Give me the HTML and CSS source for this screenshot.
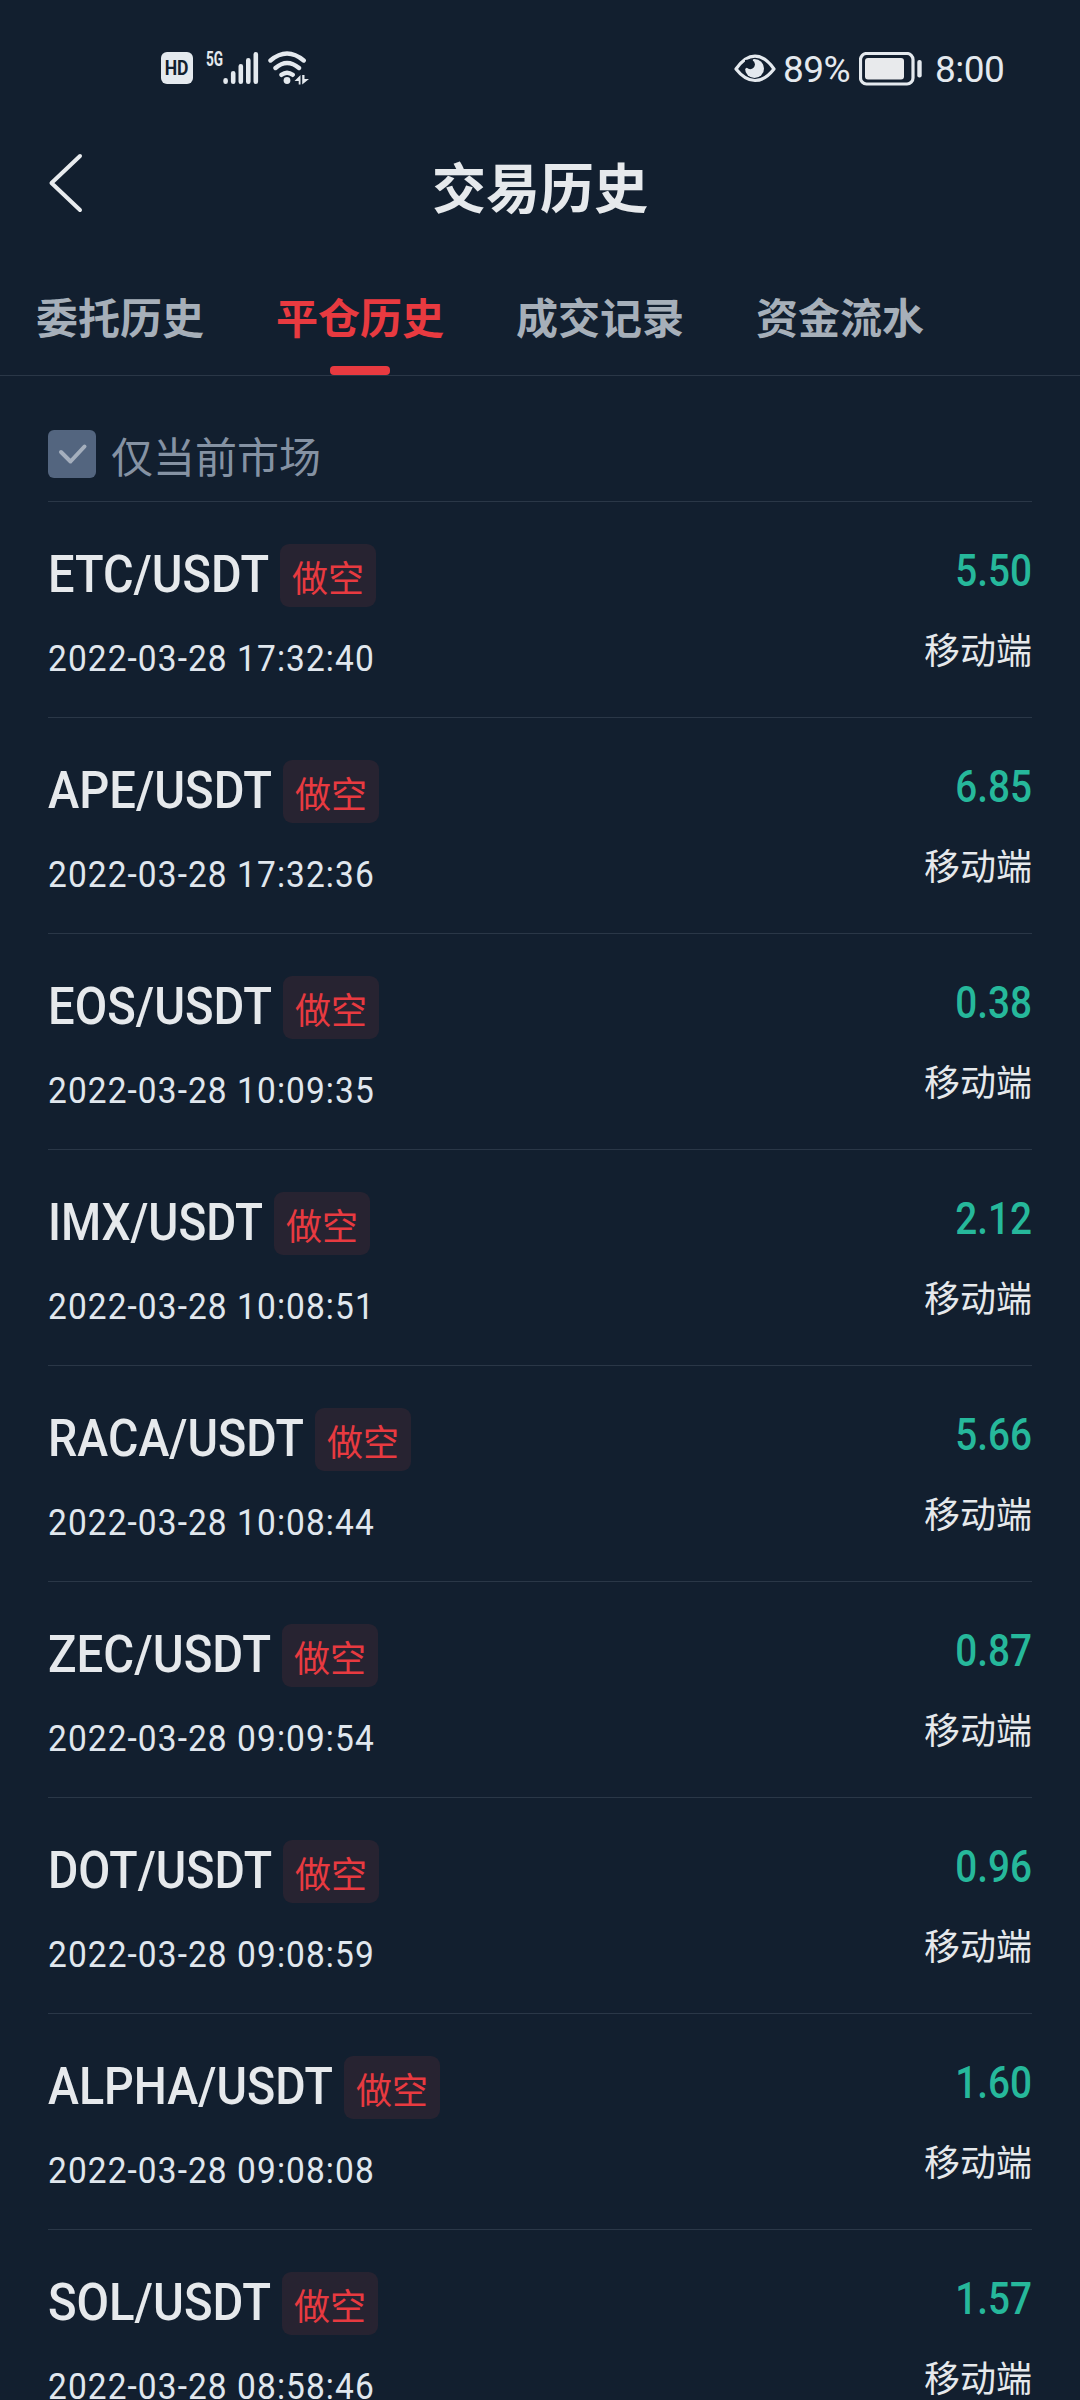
FILE: index.html
```html
<!DOCTYPE html>
<html lang="zh-CN">
<head>
<meta charset="utf-8">
<title>交易历史</title>
<link rel="stylesheet" href="styles.css">
</head>
<body>
<div class="status">
  <div class="status-left">
    <span class="hd"><span class="hd-text">HD</span></span>
    <span class="net"><span class="net-text">5G</span></span>
    <svg class="bars" width="36" height="34" viewBox="0 0 36 34" stroke="#e4e9ee" stroke-width="4.6" stroke-linecap="round"><path d="M2.6 29.3v1.4M10.2 22.3v8.4M17.8 15.3v15.4M25.3 9.3v21.4M32.8 3.3v27.4"/></svg>
    <svg class="wifi" width="42" height="34" viewBox="0 0 42 34" fill="none" stroke="#e4e9ee" stroke-width="4.4" stroke-linecap="round"><path d="M2.5 9.5Q19 -4.500 35.700 9.500M7.500 17Q19 7 31 17M13.500 23.800Q19 19.500 24.700 23.800"/><circle cx="19" cy="29.500" r="3.400" fill="#e4e9ee" stroke="none"/><path d="M26.500 30l6-6v9.500h-1.800v-3.500zM34.200 24v9.500l6.800-5.500h-4.500v-4z" fill="#e4e9ee" stroke="none"/></svg>
  </div>
  <div class="status-right">
    <svg width="42" height="30" viewBox="0 0 42 30"><path d="M2 15Q11 2.200 21 2.200T40 15Q31 26.500 21 26.500T2 15z" fill="none" stroke="#e4e9ee" stroke-width="3.200" stroke-linejoin="round"/><circle cx="20.500" cy="14.500" r="9.500" fill="#e4e9ee"/><circle cx="16.200" cy="10.500" r="4.700" fill="#121f2f"/><path d="M11 6l8-1-1 5-7 5z" fill="#121f2f"/></svg>
    <span class="pct">89%</span>
    <svg class="battery" width="64" height="34" viewBox="0 0 64 34"><rect x="1.500" y="1.500" width="52.500" height="30.500" rx="6" fill="none" stroke="#e4e9ee" stroke-width="3.200"/><rect x="6" y="6" width="39" height="21.500" rx="3" fill="#e8eaec"/><rect x="58.300" y="8" width="4.400" height="17.500" rx="2" fill="#e4e9ee"/></svg>
    <span class="clock">8:00</span>
  </div>
</div>
<header class="header">
  <svg class="back" width="38" height="62" viewBox="0 0 38 62" fill="none" stroke="#e8ebee" stroke-width="4" stroke-linecap="round" stroke-linejoin="round"><path d="M32 4L3.500 31 32 58"/></svg>
  <h1 class="title">交易历史</h1>
</header>
<nav class="tabs">
  <a class="tab">委托历史</a>
  <a class="tab tab-active">平仓历史</a>
  <a class="tab">成交记录</a>
  <a class="tab">资金流水</a>
</nav>
<main class="content">
  <div class="filter">
    <span class="check"><svg width="48" height="48" viewBox="0 0 48 48" fill="none" stroke="#a5afbd" stroke-width="4" stroke-linecap="round" stroke-linejoin="round"><path d="M13 22L22.500 31.500 36.500 16.500"/></svg></span>
    <span class="filter-label">仅当前市场</span>
  </div>
  <section class="row"><div class="left"><div class="head"><svg class="pair" width="220" height="63"><text x="0" y="48" textLength="221" lengthAdjust="spacingAndGlyphs">ETC/USDT</text></svg><span class="badge">做空</span></div><div class="date">2022-03-28 17:32:40</div></div><div class="right"><div class="value">5.50</div><div class="source">移动端</div></div></section>
  <section class="row"><div class="left"><div class="head"><svg class="pair" width="223" height="63"><text x="0" y="48" textLength="224" lengthAdjust="spacingAndGlyphs">APE/USDT</text></svg><span class="badge">做空</span></div><div class="date">2022-03-28 17:32:36</div></div><div class="right"><div class="value">6.85</div><div class="source">移动端</div></div></section>
  <section class="row"><div class="left"><div class="head"><svg class="pair" width="223" height="63"><text x="0" y="48" textLength="224" lengthAdjust="spacingAndGlyphs">EOS/USDT</text></svg><span class="badge">做空</span></div><div class="date">2022-03-28 10:09:35</div></div><div class="right"><div class="value">0.38</div><div class="source">移动端</div></div></section>
  <section class="row"><div class="left"><div class="head"><svg class="pair" width="214" height="63"><text x="0" y="48" textLength="215" lengthAdjust="spacingAndGlyphs">IMX/USDT</text></svg><span class="badge">做空</span></div><div class="date">2022-03-28 10:08:51</div></div><div class="right"><div class="value">2.12</div><div class="source">移动端</div></div></section>
  <section class="row"><div class="left"><div class="head"><svg class="pair" width="255" height="63"><text x="0" y="48" textLength="256" lengthAdjust="spacingAndGlyphs">RACA/USDT</text></svg><span class="badge">做空</span></div><div class="date">2022-03-28 10:08:44</div></div><div class="right"><div class="value">5.66</div><div class="source">移动端</div></div></section>
  <section class="row"><div class="left"><div class="head"><svg class="pair" width="222" height="63"><text x="0" y="48" textLength="223" lengthAdjust="spacingAndGlyphs">ZEC/USDT</text></svg><span class="badge">做空</span></div><div class="date">2022-03-28 09:09:54</div></div><div class="right"><div class="value">0.87</div><div class="source">移动端</div></div></section>
  <section class="row"><div class="left"><div class="head"><svg class="pair" width="223" height="63"><text x="0" y="48" textLength="224" lengthAdjust="spacingAndGlyphs">DOT/USDT</text></svg><span class="badge">做空</span></div><div class="date">2022-03-28 09:08:59</div></div><div class="right"><div class="value">0.96</div><div class="source">移动端</div></div></section>
  <section class="row"><div class="left"><div class="head"><svg class="pair" width="284" height="63"><text x="0" y="48" textLength="285" lengthAdjust="spacingAndGlyphs">ALPHA/USDT</text></svg><span class="badge">做空</span></div><div class="date">2022-03-28 09:08:08</div></div><div class="right"><div class="value">1.60</div><div class="source">移动端</div></div></section>
  <section class="row"><div class="left"><div class="head"><svg class="pair" width="222" height="63"><text x="0" y="48" textLength="223" lengthAdjust="spacingAndGlyphs">SOL/USDT</text></svg><span class="badge">做空</span></div><div class="date">2022-03-28 08:58:46</div></div><div class="right"><div class="value">1.57</div><div class="source">移动端</div></div></section>
</main>
</body>
</html>
```
FILE: styles.css
```css
* { box-sizing: border-box; }
body {
  margin: 0;
  width: 1080px;
  height: 2400px;
  overflow: hidden;
  background: #121f2f;
  color: #e6e9ec;
  font-family: Roboto, "Noto Sans CJK SC", sans-serif;
}
svg { display: block; flex: none; }

.status {
  height: 136px;
  padding: 51px 74px 0 161px;
  display: flex;
  justify-content: space-between;
  align-items: flex-start;
  color: #e4e9ee;
}
.status-left, .status-right { display: flex; align-items: flex-start; white-space: nowrap; }
.hd {
  width: 32px;
  height: 32px;
  margin: 1px 13px 0 0;
  border-radius: 6px;
  background: #e4e9ee;
  color: #121f2f;
  display: flex;
  align-items: center;
  justify-content: center;
}
.hd-text { font-size: 20px; font-weight: 700; line-height: 32px; transform: scaleX(0.88); }
.net { width: 17px; height: 16px; }
.net-text { display: block; font-size: 20px; font-weight: 700; line-height: 16px; transform: scaleX(0.68); transform-origin: 0 0; }
.bars { margin-right: 9px; }
.status-right { padding-top: 3px; }
.pct { width: 76px; margin-top: -1px; padding-left: 7px; font-size: 37px; line-height: 34px; letter-spacing: -0.5px; }
.battery { margin: -2px 12px 0 7px; }
.clock { width: 71px; margin-top: -1px; font-size: 37px; line-height: 34px; letter-spacing: -0.5px; }

.header {
  height: 124px;
  padding: 0 48px;
  display: grid;
  grid-template-columns: 38px 1fr 38px;
}
.back { margin-top: 16px; }
.title { margin: 0; padding-top: 23px; text-align: center; font-size: 54px; font-weight: 700; line-height: 64px; }

.tabs {
  height: 116px;
  border-bottom: 1px solid #2a3747;
  display: flex;
}
.tab {
  width: 240px;
  height: 115px;
  padding-top: 30px;
  display: flex;
  flex-direction: column;
  justify-content: space-between;
  align-items: center;
  color: #a6afb9;
  font-size: 42px;
  font-weight: 700;
  line-height: 60px;
}
.tab-active { color: #e83a40; }
.tab-active::after { content: ""; width: 60px; height: 9px; border-radius: 4px; background: #e83a40; }

.content { padding: 0 48px; }
.filter {
  height: 126px;
  padding-top: 54px;
  border-bottom: 1px solid #2a3747;
  display: flex;
  gap: 15px;
}
.check { width: 48px; height: 48px; border-radius: 6px; background: #53657f; }
.filter-label { color: #8592a3; font-size: 42px; line-height: 58px; }

.row {
  height: 216px;
  border-bottom: 1px solid #2a3747;
  display: flex;
  justify-content: space-between;
  white-space: nowrap;
}
.left { padding-top: 42px; }
.head { height: 63px; display: flex; gap: 12px; }
.pair { overflow: visible; fill: #e6e9ec; font-size: 52px; font-weight: 500; }
.badge {
  width: 96px;
  height: 63px;
  padding-top: 6px;
  border-radius: 9px;
  background: #272331;
  color: #e83a40;
  font-size: 36px;
  line-height: 60px;
  text-align: center;
}
.date {
  margin-top: 32px;
  font-size: 36px;
  line-height: 40px;
  color: #e0e7ee;
  letter-spacing: 1.15px;
  transform: scaleX(0.93);
  transform-origin: 0 0;
}
.right { padding-top: 46px; text-align: right; }
.value { font-size: 44px; font-weight: 500; line-height: 46px; color: #26b89b; transform: scaleX(0.88); transform-origin: 100% 0; }
.source { margin-top: 34px; font-size: 36px; line-height: 48px; }
```
